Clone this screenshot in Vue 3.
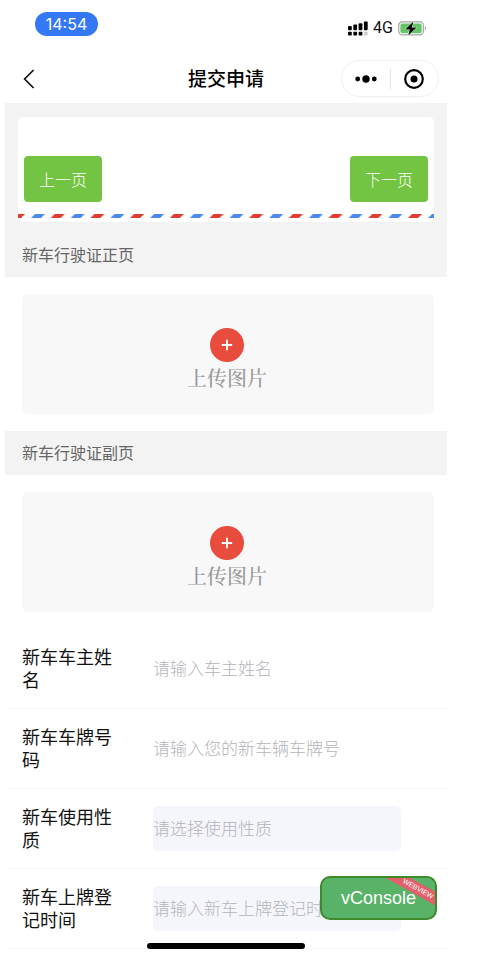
<template>
  <div class="phone">
    <div class="status-bar">
      <span class="status-time">14:54</span>
      <div class="status-right">
        <svg class="icon-signal" width="20" height="15" viewBox="0 0 20 15">
          <rect x="0" y="5" width="3.8" height="4.2" rx="1" />
          <rect x="5.3" y="3.6" width="3.8" height="5.6" rx="1" />
          <rect x="10.6" y="2.2" width="3.8" height="7" rx="1" />
          <rect x="15.9" y="0.6" width="3.8" height="8.6" rx="1" />
          <rect x="0" y="10.8" width="3.8" height="3.8" rx="1" />
          <rect x="5.3" y="10.8" width="3.8" height="3.8" rx="1" />
          <rect x="10.6" y="10.8" width="3.8" height="3.8" rx="1" />
          <rect x="15.9" y="10.8" width="3.8" height="3.8" rx="1" fill="#ccc" />
        </svg>
        <span class="status-net">4G</span>
        <svg width="29" height="15" viewBox="0 0 29 15">
          <rect x="0.7" y="0.9" width="24.6" height="13" rx="3.6" fill="#fff" stroke="#a5a5a5" stroke-width="1.2" />
          <rect x="2.4" y="2.6" width="21.2" height="9.6" rx="2" fill="#62c766" />
          <path d="M26.8 5.2c1.6.6 1.6 3.8 0 4.4z" fill="#a5a5a5" />
          <path d="M15.4.6 7.2 8.4h4.6l-1.6 6 8.4-7.8h-4.8z" fill="#000" stroke="#fff" stroke-width="1" paint-order="stroke" />
        </svg>
      </div>
    </div>

    <header class="nav-bar">
      <button type="button" class="nav-back" aria-label="返回">
        <svg width="12" height="20" viewBox="0 0 12 20">
          <path d="M10.6 1 1.6 10l9 9" fill="none" stroke="#111" stroke-width="1.7" />
        </svg>
      </button>
      <h1 class="nav-title">提交申请</h1>
      <div class="capsule">
        <button type="button" class="capsule-btn" aria-label="更多">
          <svg width="22" height="10" viewBox="0 0 22 10">
            <circle cx="2.7" cy="5" r="2.4" />
            <circle cx="11" cy="5" r="3.7" />
            <circle cx="19.3" cy="5" r="2.4" />
          </svg>
        </button>
        <span class="capsule-line"></span>
        <button type="button" class="capsule-btn" aria-label="关闭">
          <svg width="20" height="20" viewBox="0 0 20 20">
            <circle cx="10" cy="10" r="8.8" fill="none" stroke="#000" stroke-width="2.2" />
            <circle cx="10" cy="10" r="3.5" />
          </svg>
        </button>
      </div>
    </header>

    <section class="steps">
      <div class="steps-card">
        <div class="steps-btns">
          <button type="button" class="step-btn">上一页</button>
          <button type="button" class="step-btn">下一页</button>
        </div>
        <svg class="stripe" width="100%" height="4">
          <defs>
            <pattern id="mail-stripe" width="39.7" height="4" patternUnits="userSpaceOnUse">
              <path d="M-7 4-3 0H7L3 4zM32.7 4l4-4h10l-4 4z" fill="#e03c31" />
              <path d="M13 4l4-4h10l-4 4z" fill="#4a8af0" />
            </pattern>
          </defs>
          <rect width="100%" height="4" fill="url(#mail-stripe)" />
        </svg>
      </div>
    </section>

    <template v-for="item in uploads" :key="item">
      <h2 class="group-title">{{ item }}</h2>
      <button type="button" class="upload" :aria-label="item">
        <svg width="34" height="34" viewBox="0 0 34 34">
          <circle cx="17" cy="17" r="17" fill="#e74c3c" />
          <path d="M17 11.8v10.4M11.8 17h10.4" stroke="#fff" stroke-width="1.8" />
        </svg>
        <span class="upload-text">上传图片</span>
      </button>
    </template>

    <form class="form" @submit.prevent>
      <div v-for="field in fields" :key="field.name" class="form-row">
        <label class="form-label" :for="field.name">{{ field.label }}</label>
        <select
          v-if="field.options"
          :id="field.name"
          v-model="form[field.name]"
          class="form-control picker"
        >
          <option value="" disabled>{{ field.placeholder }}</option>
          <option v-for="opt in field.options" :key="opt" :value="opt">{{ opt }}</option>
        </select>
        <input
          v-else
          :id="field.name"
          v-model="form[field.name]"
          type="text"
          :placeholder="field.placeholder"
          autocomplete="off"
          class="form-control"
          :class="{ picker: field.picker }"
        />
      </div>
    </form>

    <button type="button" class="vconsole">
      vConsole
      <span class="vconsole-tag">WEBVIEW</span>
    </button>
    <div class="home-bar"></div>
  </div>
</template>

<script setup>
import { reactive } from 'vue'

const uploads = ['新车行驶证正页', '新车行驶证副页']

const fields = [
  { name: 'owner', label: '新车车主姓名', placeholder: '请输入车主姓名' },
  { name: 'plate', label: '新车车牌号码', placeholder: '请输入您的新车辆车牌号' },
  { name: 'usage', label: '新车使用性质', placeholder: '请选择使用性质', options: ['营运', '非营运'] },
  { name: 'regDate', label: '新车上牌登记时间', placeholder: '请输入新车上牌登记时间', picker: true }
]

const form = reactive({
  owner: '',
  plate: '',
  usage: '',
  regDate: ''
})
</script>

<style>
body {
  margin: 0;
  background: #fff;
}
</style>

<style scoped>
.phone {
  position: relative;
  margin: 0 30px 0 5px;
  font-family: Inter, "Noto Sans CJK SC", sans-serif;
  color: #111;
  background: #fff;
}
.phone * {
  box-sizing: border-box;
}
button {
  padding: 0;
  border: 0;
  background: none;
  font-family: inherit;
  cursor: pointer;
}
svg {
  display: block;
}
.status-bar {
  display: flex;
  justify-content: space-between;
  align-items: flex-start;
  height: 54px;
  padding: 12px 20px 0 30px;
}
.status-time {
  width: 63px;
  height: 24px;
  line-height: 24px;
  border-radius: 12px;
  background: #3478f6;
  color: #fff;
  font-size: 16px;
  font-weight: 400;
  text-align: center;
}
.status-right {
  display: flex;
  align-items: center;
  gap: 5px;
  height: 32px;
}
.status-net {
  font-family: Roboto, sans-serif;
  font-size: 16px;
  line-height: 20px;
}
.nav-bar {
  display: grid;
  grid-template-columns: 1fr auto 1fr;
  align-items: center;
  height: 49px;
  padding: 0 8px 0 18px;
}
.nav-back {
  justify-self: start;
}
.nav-title {
  margin: 2px 0 0 -10px;
  font-size: 19px;
  line-height: 28px;
  font-weight: 500;
  color: #000;
}
.capsule {
  justify-self: end;
  display: flex;
  align-items: center;
  width: 98px;
  height: 37px;
  border: 1px solid #efefef;
  border-radius: 19px;
}
.capsule-btn {
  flex: 1;
  display: flex;
  justify-content: center;
}
.capsule-line {
  width: 1px;
  height: 20px;
  background: #e6e6e6;
}
.steps {
  padding: 14px 13px 11px;
  background: #f3f3f3;
}
.steps-card {
  padding: 39px 0 4px;
  border-radius: 5px;
  background: #fff;
}
.steps-btns {
  display: flex;
  justify-content: space-between;
  padding: 0 6px 12px;
}
.step-btn {
  width: 78px;
  height: 46px;
  border-radius: 4px;
  background: #74c443;
  color: #fff;
  font-size: 16px;
  font-weight: 300;
}
.group-title {
  margin: 0;
  padding: 1px 17px 0;
  height: 44px;
  line-height: 43px;
  background: #f3f3f3;
  color: #666;
  font-size: 16px;
  font-weight: 400;
}
.upload {
  display: flex;
  flex-direction: column;
  align-items: center;
  width: calc(100% - 30px);
  height: 120px;
  margin: 17px 13px 17px 17px;
  padding: 34px 2px 0 0;
  border-radius: 6px;
  background: #f8f8f8;
}
.upload-text {
  font-family: "Liberation Serif", "Noto Serif CJK SC", "Noto Sans CJK SC", serif;
  font-size: 20px;
  font-weight: 500;
  line-height: 34px;
  color: #999;
}
.form-row {
  display: flex;
  align-items: center;
  height: 80px;
  padding: 0 46px 0 17px;
  border-bottom: 1px solid #f7f7f7;
}
.form-label {
  width: 101px;
  margin-right: 30px;
  font-size: 18px;
  line-height: 23px;
}
.form-control {
  flex: 1;
  min-width: 0;
  height: 45px;
  padding: 0;
  border: 0;
  border-radius: 5px;
  outline: none;
  appearance: none;
  background: transparent;
  font-family: inherit;
  font-size: 17px;
  font-weight: 300;
  color: #111;
}
.form-control::placeholder {
  color: #b4b4ba;
}
.picker {
  background: #f5f6fb;
}
select.picker {
  color: #b4b4ba;
}
.vconsole {
  position: absolute;
  right: 10px;
  bottom: 29px;
  width: 117px;
  height: 44px;
  border: 2px solid #3f8a2b;
  border-radius: 10px;
  overflow: hidden;
  background: #58b368;
  color: #fff;
  font-family: "Liberation Sans", sans-serif;
  font-size: 18px;
}
.vconsole-tag {
  position: absolute;
  top: 5px;
  right: -1px;
  width: 36px;
  line-height: 12px;
  font-size: 7px;
  transform: rotate(29deg);
}
/* ribbon runs past the word on both sides, the button clips it */
.vconsole-tag::before {
  content: "";
  position: absolute;
  z-index: -1;
  inset: 0 -24px;
  background: #e0616b;
}
.home-bar {
  position: absolute;
  left: 50%;
  bottom: 0;
  width: 158px;
  height: 6px;
  margin-left: -79px;
  border-radius: 3px;
  background: #000;
}
</style>
